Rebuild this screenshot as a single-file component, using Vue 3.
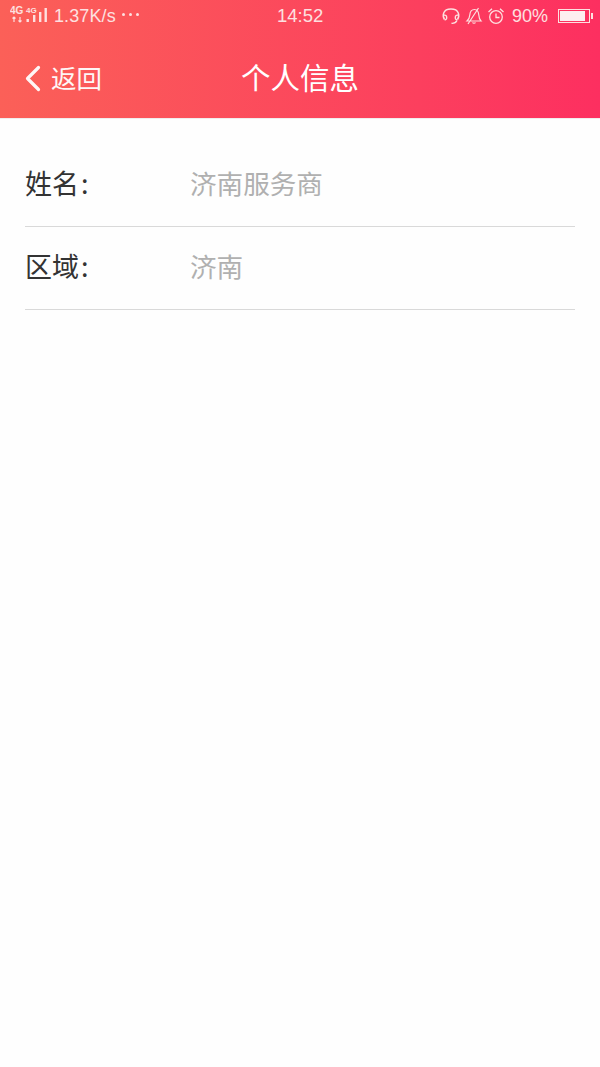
<script setup>
const rows = [
  { label: '姓名', value: '济南服务商' },
  { label: '区域', value: '济南' },
]
</script>

<template>
  <div class="page">
    <header class="head">
      <div class="status">
        <div class="st-left">
          <svg class="signal" width="40" height="26" viewBox="0 0 40 26">
            <text x="0" y="11" class="net">4G</text>
            <path d="M4 14v5M2.500 15.500L4 14l1.500 1.500M10 14v5M8.500 17.500L10 19l1.500-1.500" stroke="#fde0e0" stroke-width="1.200" fill="none"/>
            <text x="16" y="10" class="net small">4G</text>
            <rect x="16.500" y="16" width="2.400" height="3" fill="#fde0e0"/>
            <rect x="23" y="12" width="2.400" height="7" fill="#fde0e0"/>
            <rect x="29" y="9" width="2.400" height="10" fill="#fde0e0"/>
            <rect x="34.500" y="5" width="2.400" height="14" fill="#fde0e0"/>
          </svg>
          <span class="speed">1.37K/s</span>
          <span class="dots"><i></i><i></i><i></i></span>
        </div>
        <span class="time">14:52</span>
        <div class="st-right">
          <svg width="20" height="18" viewBox="0 0 20 18" fill="none" stroke="#fde0e0" stroke-width="1.400">
            <path d="M3.500 12.500C1.200 9 1.500 2 10 2s8.800 7 6.500 10.500"/>
            <path d="M3 8.200c1.500-.4 2.700.4 2.700 2.200S4.800 13 3.600 12.600M17 8.200c-1.500-.4-2.700.4-2.700 2.200s.9 2.600 2.100 2.200"/>
            <path d="M16 13.500c-1 2-3 3-5.500 2.800"/>
          </svg>
          <svg width="18" height="18" viewBox="0 0 18 18" fill="none" stroke="#fde0e0" stroke-width="1.200">
            <path d="M2 14h14c-1.600-1.600-2-3-2.200-6C13.500 4 11.500 2.500 9.500 2.500 6.500 2.500 5 5 4.800 8 4.600 11 3.500 12.600 2 14zM7.500 15.500c.6 1 2.400 1 3 0M3 17L13.500 1"/>
          </svg>
          <svg width="18" height="18" viewBox="0 0 18 18" fill="none" stroke="#fde0e0" stroke-width="1.300">
            <circle cx="9" cy="10" r="6.300"/>
            <path d="M9 6.500V10.500H12.500M1.500 5L5 1.800M16.500 5L13 1.800"/>
          </svg>
          <span class="pct">90%</span>
          <span class="battery"><i></i></span>
        </div>
      </div>
      <div class="nav">
        <div class="back">
          <svg width="17" height="27" viewBox="0 0 17 27" fill="none" stroke="#fff" stroke-width="3.200" stroke-linecap="round" stroke-linejoin="round">
            <path d="M14.500 2.500L3.500 13.500l11 11"/>
          </svg>
          <span class="back-text">返回</span>
        </div>
        <h1 class="title">个人信息</h1>
      </div>
    </header>
    <main class="list">
      <div v-for="r in rows" :key="r.label" class="row">
        <span class="label">{{ r.label }}<b>:</b></span>
        <span class="value">{{ r.value }}</span>
      </div>
    </main>
  </div>
</template>

<style>
html, body { margin: 0; background: #fff; }
</style>

<style scoped>
.page {
  width: 600px;
  height: 1067px;
  background: #fefefe;
  font-family: "Noto Sans CJK SC", "Liberation Sans", sans-serif;
  overflow: hidden;
}
.head {
  height: 118px;
  background: linear-gradient(90deg, #fb6058 0%, #fc3f5e 70%, #fd2f60 100%);
  color: #fff;
  border-bottom: 1px solid #f0eded;
}
.status {
  height: 32px;
  position: relative;
  display: flex;
  align-items: center;
  justify-content: space-between;
  color: #fde0e0;
  font-family: "Liberation Sans", sans-serif;
  font-size: 18px;
  padding: 0 10px 0 10px;
}
.st-left, .st-right { display: flex; align-items: center; }
.signal { margin-right: 4px; }
.net { font-size: 10px; font-weight: 700; fill: #fde0e0; font-family: "Liberation Sans", sans-serif; }
.net.small { font-size: 8px; }
.speed { letter-spacing: 0.1px; }
.dots { display: flex; gap: 3.500px; margin-left: 6px; margin-bottom: 3px; }
.dots i { width: 3.500px; height: 3.500px; border-radius: 50%; background: #fde0e0; }
.time {
  position: absolute;
  left: 277px;
  top: 6px;
  line-height: 20px;
  font-size: 18.500px;
}
.st-right { gap: 4px; }
.pct { margin-left: 3px; margin-right: 6px; }
.battery {
  width: 28px;
  height: 10px;
  border: 1px solid #fde0e0;
  position: relative;
  display: block;
  padding: 1px;
  box-sizing: content-box;
}
.battery i { display: block; width: 25px; height: 10px; background: #fdeef0; }
.battery::after {
  content: "";
  position: absolute;
  right: -4px;
  top: 3px;
  width: 2px;
  height: 6px;
  background: #fde0e0;
}
.nav {
  height: 86px;
  position: relative;
  display: flex;
  align-items: center;
  justify-content: center;
}
.back {
  position: absolute;
  left: 24px;
  top: 33px;
  display: flex;
  align-items: center;
  gap: 10px;
  font-size: 25.500px;
  line-height: 27px;
  opacity: 0.95;
}
.back-text { margin-top: -4px; }
.title {
  margin: 2px 0 0;
  font-size: 29.500px;
  font-weight: 400;
  line-height: 40px;
}
.list { padding: 0 25px; }
.row {
  height: 83px;
  display: flex;
  align-items: center;
  padding-bottom: 5px;
  border-bottom: 1px solid #d9d9d9;
  box-sizing: border-box;
}
.row:first-child { height: 108px; padding-top: 19px; padding-bottom: 0; }
.label {
  width: 165px;
  font-size: 27px;
  color: #333;
}
.label b { font-weight: 400; margin-left: 2px; }
.value {
  font-size: 26.600px;
  color: #b0b0b0;
}
</style>
